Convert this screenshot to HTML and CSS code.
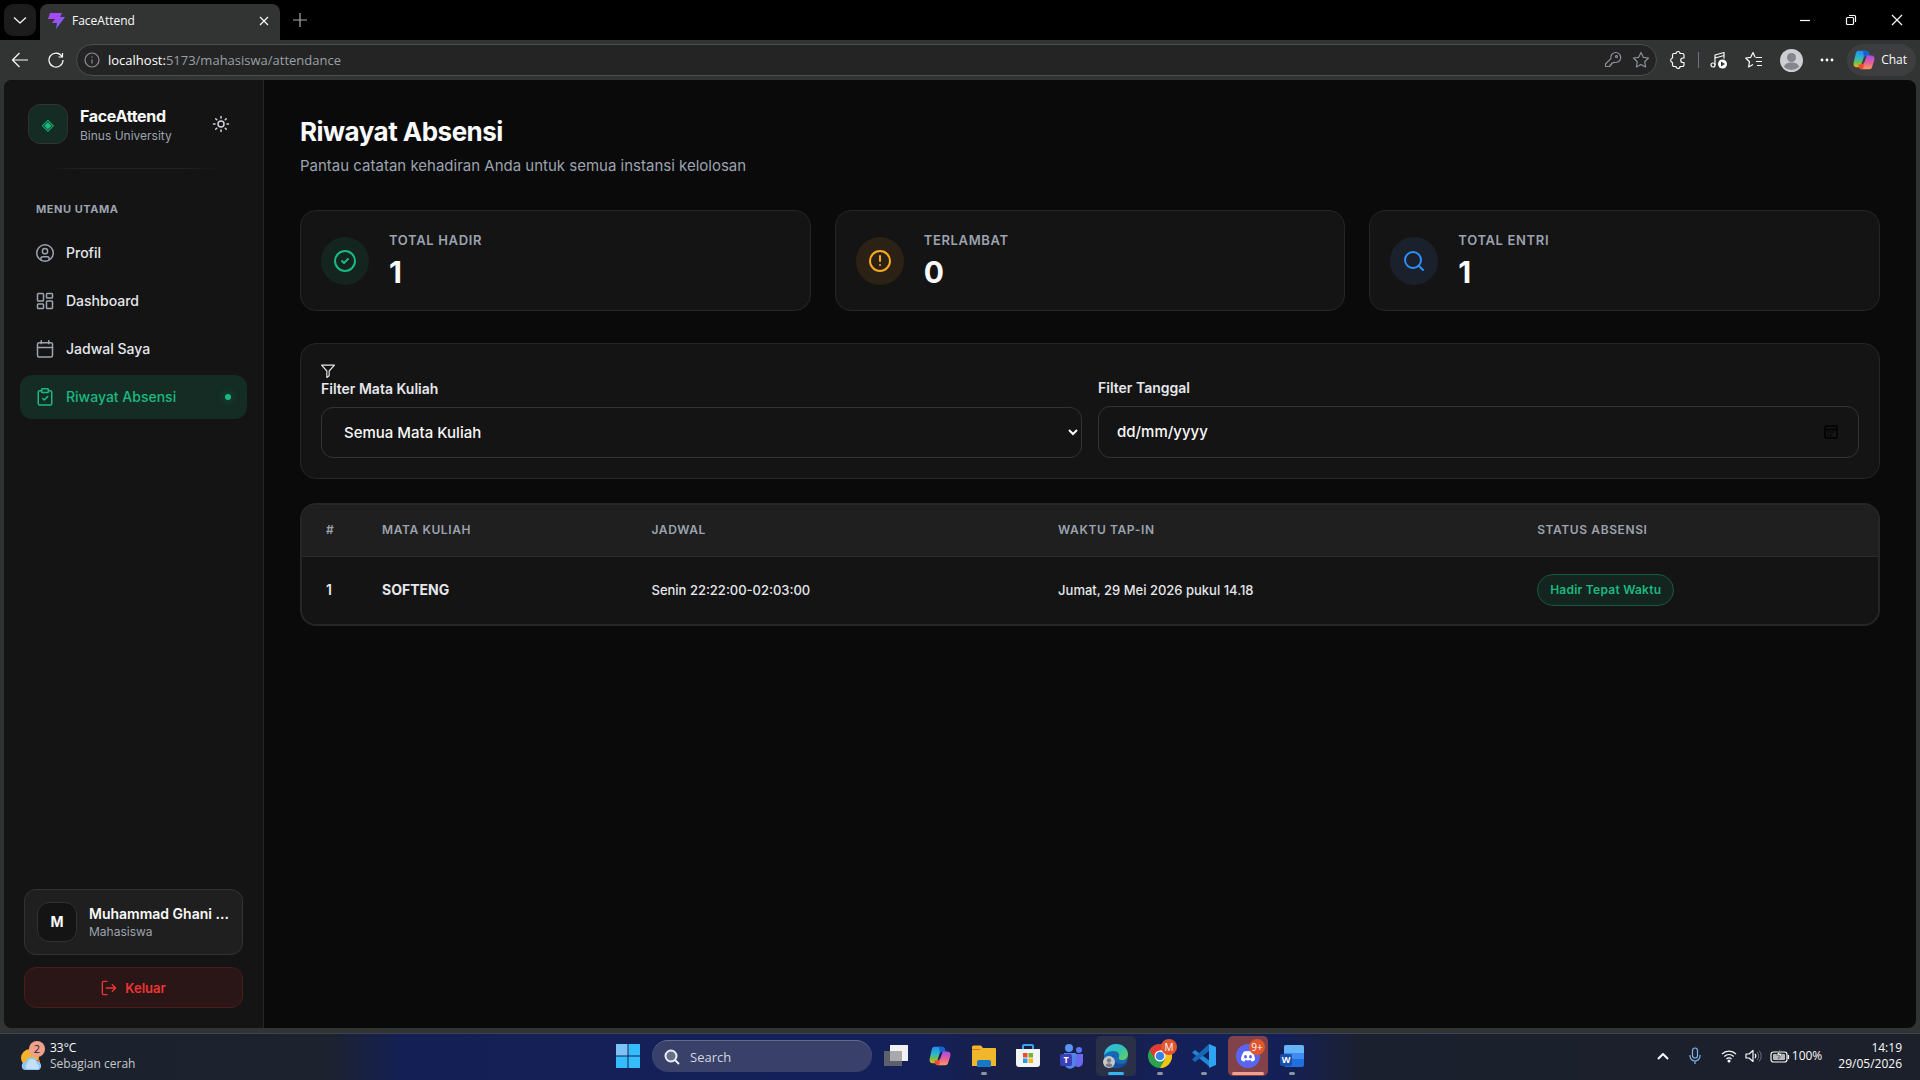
FILE: index.html
```html
<!DOCTYPE html>
<html lang="id">
<head>
<meta charset="utf-8">
<title>FaceAttend</title>
<link rel="stylesheet" href="styles.css">
</head>
<body>
<svg class="defs" width="0" height="0" aria-hidden="true">
  <defs>
    <linearGradient id="g-bolt" x1="0" y1="0" x2="1" y2="1"><stop offset=".5" stop-color="#a34bf5"/><stop offset="1" stop-color="#3a8cf8"/></linearGradient>
    <linearGradient id="g-cp1" x1="0" y1="0" x2="0" y2="1"><stop offset="0" stop-color="#1f8ff0"/><stop offset=".45" stop-color="#2fb6c8"/><stop offset=".7" stop-color="#6cc24a"/><stop offset="1" stop-color="#f6b21b"/></linearGradient>
    <linearGradient id="g-cp2" x1="0" y1="0" x2="0" y2="1"><stop offset="0" stop-color="#a44cf0"/><stop offset=".5" stop-color="#e85a9c"/><stop offset="1" stop-color="#f79a5c"/></linearGradient>
    <linearGradient id="g-edge" x1="0" y1="0" x2="1" y2="1"><stop offset="0" stop-color="#35b8f0"/><stop offset=".5" stop-color="#2fc3b5"/><stop offset="1" stop-color="#6fd14e"/></linearGradient>
    <symbol id="copilot" viewBox="0 0 24 24">
      <path d="M6 2h8c2 0 3 1 3.500 3l.5 2h-3c-2 0-3 1-3.600 3L9 17c-.6 2-1.500 3-3.500 3H4c-2.500 0-4-2-3.300-5L3 5c.5-2 1.300-3 3-3z" fill="url(#g-cp1)"/>
      <path d="M11 2h3c2 0 3 1 3.500 3l.5 2h-3c-1.500 0-2.600.8-3.200 2z" fill="#1660d0"/>
      <path d="M18 22h-8c-2 0-3-1-3.500-3L6 17h3c2 0 3-1 3.600-3L15 7h5c2.500 0 4 2 3.300 5L21 19c-.5 2-1.300 3-3 3z" fill="url(#g-cp2)"/>
      <path d="M6 17h3c1.500 0 2.600-.8 3.200-2L11 22h-1c-2 0-3-1-3.500-3z" fill="#ef4a2b"/>
    </symbol>
  </defs>
</svg>
<div class="window">
  <header class="tabstrip">
    <button class="tab-search" aria-label="Cari tab"><svg width="14" height="14" viewBox="0 0 14 14"><path d="M1 4.500l6 5.500 6-5.500" class="line"/></svg></button>
    <div class="tab">
      <svg width="18" height="18" viewBox="0 0 18 18"><path d="M3 1h12l-2 4h5l-9 12 1-6H5l3-4H1z" fill="url(#g-bolt)"/></svg>
      <span class="tab-title">FaceAttend</span>
      <button class="plain" aria-label="Tutup tab"><svg width="10" height="10" viewBox="0 0 10 10"><path d="M1 1l8 8M9 1l-8 8" class="line"/></svg></button>
    </div>
    <button class="plain new-tab" aria-label="Tab baru"><svg width="16" height="16" viewBox="0 0 16 16"><path d="M8 1v14M1 8h14" class="line"/></svg></button>
    <div class="window-controls">
      <button class="plain" aria-label="Kecilkan"><svg width="12" height="12" viewBox="0 0 12 12"><path d="M1 6.500h10" class="line"/></svg></button>
      <button class="plain" aria-label="Pulihkan"><svg width="12" height="12" viewBox="0 0 12 12"><rect x="1.500" y="3.500" width="7" height="7" rx="1" class="line"/><path d="M4 1.500h5.500a1 1 0 011 1V8" class="line"/></svg></button>
      <button class="plain" aria-label="Tutup"><svg width="12" height="12" viewBox="0 0 12 12"><path d="M1 1l10 10M11 1L1 11" class="line"/></svg></button>
    </div>
  </header>

  <div class="toolbar">
    <button class="plain nav-btn" aria-label="Kembali"><svg width="18" height="18" viewBox="0 0 18 18"><path d="M17 9H2M8.500 2L1.500 9l7 7" class="line"/></svg></button>
    <button class="plain nav-btn" aria-label="Muat ulang"><svg width="16" height="16" viewBox="0 0 16 16"><path d="M14 4.500A7 7 0 1015 8M14.500 1v4h-4" class="line"/></svg></button>
    <div class="address">
      <svg class="dim" width="16" height="16" viewBox="0 0 16 16"><circle cx="8" cy="8" r="7" class="line"/><path d="M8 7.500v4M8 4.500v1.200" class="line"/></svg>
      <span class="url"><b>localhost:</b>5173/mahasiswa/attendance</span>
      <svg class="dim" width="18" height="18" viewBox="0 0 18 18"><path d="M11.500 1.500a5 5 0 11-1.500 9.700L9 12.200H7.500v1.600H6v1.700H1.500V13l5.400-5.400a5 5 0 014.600-6.100z" class="line"/><circle cx="12.500" cy="5.500" r="1" class="line"/></svg>
      <svg class="dim" width="18" height="18" viewBox="0 0 18 18"><path d="M9 1.500l2.300 4.800 5.200.7-3.800 3.700.9 5.300L9 13.500 4.400 16l.9-5.300L1.500 7l5.200-.7z" class="line"/></svg>
    </div>
    <div class="tools">
      <button class="plain" aria-label="Ekstensi"><svg width="18" height="18" viewBox="0 0 18 18"><path d="M5 2.500h2a2 2 0 014 0h2.500a1.500 1.500 0 011.500 1.500v3h-1a2 2 0 000 4.500h1v2.500a1.500 1.500 0 01-1.500 1.500H11a2 2 0 01-4 0H5a1.500 1.500 0 01-1.500-1.500v-2.500a2.300 2.300 0 010-4.500V4A1.500 1.500 0 015 2.500z" class="line"/></svg></button>
      <span class="tool-divider"></span>
      <button class="plain" aria-label="Media"><svg width="18" height="18" viewBox="0 0 18 18"><path d="M5 14V4l9-2.500v6M5 7l9-2.500" class="line"/><circle cx="3" cy="14" r="2" class="line"/><circle cx="12.500" cy="13" r="4.500" fill="#fff"/><path d="M11 10.500l4 2.500-4 2.500z" fill="#323433"/></svg></button>
      <button class="plain" aria-label="Favorit"><svg width="18" height="18" viewBox="0 0 18 18"><path d="M10 6L8 1.500 5.700 6.300l-5 .7L4.500 10.700 3.600 16 8 13.500M10.500 6.500H17M11 10.500h6M12 14.500h5" class="line"/></svg></button>
      <button class="plain" aria-label="Akun"><svg width="23" height="23" viewBox="0 0 23 23"><circle cx="11.500" cy="11.500" r="11.500" fill="#cdced2"/><circle cx="11.500" cy="8.500" r="4.500" fill="#84868e"/><path d="M4 18c1-3.500 4-4.500 7.500-4.500S18 14.500 19 18a11 11 0 01-15 0z" fill="#84868e"/></svg></button>
      <button class="plain" aria-label="Lainnya"><svg width="14" height="14" viewBox="0 0 14 14" fill="#fff"><circle cx="2" cy="7" r="1.400"/><circle cx="7" cy="7" r="1.400"/><circle cx="12" cy="7" r="1.400"/></svg></button>
      <button class="chat"><svg width="22" height="22"><use href="#copilot"/></svg>Chat</button>
    </div>
  </div>

  <div class="viewport">
    <aside class="sidebar">
      <div class="brand">
        <div class="brand-logo">◈</div>
        <div class="brand-text"><div class="brand-name">FaceAttend</div><div class="brand-sub">Binus University</div></div>
        <button class="plain theme" aria-label="Ganti tema"><svg class="icon" width="18" height="18" viewBox="0 0 24 24"><circle cx="12" cy="12" r="4"/><path d="M12 2v2M12 20v2M4.930 4.930l1.410 1.410M17.660 17.660l1.410 1.410M2 12h2M20 12h2M6.340 17.660l-1.410 1.410M19.070 4.930l-1.410 1.410"/></svg></button>
      </div>
      <div class="brand-rule"></div>
      <div class="menu-title">MENU UTAMA</div>
      <nav class="menu">
        <a href="#profil"><svg class="icon" width="18" height="18" viewBox="0 0 24 24"><circle cx="12" cy="12" r="11"/><circle cx="12" cy="9.500" r="3.500"/><path d="M6.500 21v-1.500a2.500 2.500 0 012.500-2.500h6a2.500 2.500 0 012.500 2.500V21"/></svg>Profil</a>
        <a href="#dashboard"><svg class="icon" width="18" height="18" viewBox="0 0 24 24"><rect x="2" y="2" width="8" height="10" rx="1"/><rect x="14" y="2" width="8" height="6" rx="1"/><rect x="14" y="12" width="8" height="10" rx="1"/><rect x="2" y="16" width="8" height="6" rx="1"/></svg>Dashboard</a>
        <a href="#jadwal"><svg class="icon" width="18" height="18" viewBox="0 0 24 24"><path d="M7 1v4M17 1v4M2 10h20"/><rect x="2" y="3.500" width="20" height="19" rx="2"/></svg>Jadwal Saya</a>
        <a href="#riwayat" class="active" aria-current="page"><svg class="icon" width="18" height="18" viewBox="0 0 24 24"><rect x="7.500" y="1" width="9" height="5" rx="1"/><path d="M16.500 3.500H19a2 2 0 012 2v15a2 2 0 01-2 2H5a2 2 0 01-2-2v-15a2 2 0 012-2h2.500M9 14l2 2 4.500-4.500"/></svg>Riwayat Absensi<span class="menu-dot"></span></a>
      </nav>
      <div class="account">
        <div class="user">
          <div class="avatar">M</div>
          <div><div class="user-name">Muhammad Ghani ...</div><div class="user-role">Mahasiswa</div></div>
        </div>
        <button class="logout"><svg class="icon" width="16" height="16" viewBox="0 0 24 24"><path d="M9 22H4a2 2 0 01-2-2V4a2 2 0 012-2h5M8 12h14M17 7l5 5-5 5"/></svg>Keluar</button>
      </div>
    </aside>

    <main class="main">
      <h1>Riwayat Absensi</h1>
      <p class="lead">Pantau catatan kehadiran Anda untuk semua instansi kelolosan</p>

      <section class="stats">
        <div class="stat">
          <div class="stat-icon green"><svg class="icon" width="24" height="24" viewBox="0 0 24 24"><circle cx="12" cy="12" r="10"/><path d="M9 12l2 2 4-4"/></svg></div>
          <div><div class="stat-label">TOTAL HADIR</div><div class="stat-value">1</div></div>
        </div>
        <div class="stat">
          <div class="stat-icon amber"><svg class="icon" width="24" height="24" viewBox="0 0 24 24"><circle cx="12" cy="12" r="10"/><path d="M12 7v5M12 16h.01"/></svg></div>
          <div><div class="stat-label">TERLAMBAT</div><div class="stat-value">0</div></div>
        </div>
        <div class="stat">
          <div class="stat-icon blue"><svg class="icon" width="24" height="24" viewBox="0 0 24 24"><circle cx="11" cy="11" r="8"/><path d="M21 21l-4.300-4.300"/></svg></div>
          <div><div class="stat-label">TOTAL ENTRI</div><div class="stat-value">1</div></div>
        </div>
      </section>

      <section class="filters">
        <div class="field">
          <label for="course"><svg class="icon" width="14" height="14" viewBox="0 0 24 24"><path d="M1 2h22l-9 10v8l-4 3V12z"/></svg>Filter Mata Kuliah</label>
          <select id="course"><option>Semua Mata Kuliah</option></select>
        </div>
        <div class="field">
          <label for="date">Filter Tanggal</label>
          <div class="date-box">
            <input id="date" type="text" placeholder="dd/mm/yyyy">
            <button class="plain picker" aria-label="Pilih tanggal"><svg width="14" height="14" viewBox="0 0 14 14"><rect x="1" y="1" width="12" height="12" rx="1" fill="none" stroke="currentColor" stroke-width="1.500"/><path d="M1 4.500h12" stroke="currentColor" stroke-width="1.500"/><path d="M3.500 7h7M3.500 10h5" stroke="currentColor" stroke-width="1.500" stroke-dasharray="1.500 1"/></svg></button>
          </div>
        </div>
      </section>

      <div class="table-box">
        <table>
          <colgroup><col class="c-no"><col class="c-course"><col class="c-schedule"><col class="c-time"><col></colgroup>
          <thead><tr><th>#</th><th>MATA KULIAH</th><th>JADWAL</th><th>WAKTU TAP-IN</th><th>STATUS ABSENSI</th></tr></thead>
          <tbody><tr><td class="num">1</td><td class="course">SOFTENG</td><td>Senin 22:22:00-02:03:00</td><td>Jumat, 29 Mei 2026 pukul 14.18</td><td><span class="badge">Hadir Tepat Waktu</span></td></tr></tbody>
        </table>
      </div>
    </main>
  </div>
</div>

<footer class="taskbar">
  <div class="weather">
    <svg width="26" height="30" viewBox="0 0 26 30"><circle cx="10" cy="17" r="9" fill="#f5b32c"/><path d="M14 19h6v4h-6z" fill="#e8622a"/><circle cx="17" cy="8" r="8" fill="#f0a08c"/><path d="M6 29a4 4 0 01-.5-8A6 6 0 0117 20a5 5 0 012 9z" fill="#8fc6f5"/><path d="M7 28a3 3 0 010-5 5 5 0 0110 0 3 3 0 011 5z" fill="#c3e0f8"/><text x="17" y="12" text-anchor="middle" class="weather-count">2</text></svg>
    <div><div>33°C</div><div class="weather-text">Sebagian cerah</div></div>
  </div>
  <div class="apps">
    <button class="app" aria-label="Mulai"><svg width="24" height="24" viewBox="0 0 24 24"><path d="M0 0h11.500v11.500H0z" fill="#7cc2f7"/><path d="M12.500 0H24v11.500H12.500zM0 12.500h11.500V24H0zM12.500 12.500H24V24H12.500z" fill="#35bdfb"/></svg></button>
    <label class="search"><svg width="16" height="16" viewBox="0 0 16 16"><circle cx="7" cy="7" r="5.500" fill="#61718a" stroke="#eceef2" stroke-width="2"/><path d="M11 11l4 4" stroke="#eceef2" stroke-width="2"/></svg><input type="text" placeholder="Search" aria-label="Search"></label>
    <div class="app-row">
      <button class="app" aria-label="Tampilan tugas"><svg width="24" height="24" viewBox="0 0 24 24"><path d="M6 1h18v16H6z" fill="#f1f1f1"/><path d="M0 7h18v15H0z" fill="#5c6068"/><path d="M6 7h12v10H6z" fill="#a7a9ad"/></svg></button>
      <button class="app" aria-label="Copilot"><svg width="22" height="22"><use href="#copilot"/></svg></button>
      <button class="app running" aria-label="File Explorer"><svg width="24" height="24" viewBox="0 0 24 24"><path d="M0 3a1.500 1.500 0 011.500-1.500H9L11 4h12a1 1 0 011 1v17H0z" fill="#f0b62c"/><path d="M0 5.500h8" stroke="#e06a2a"/><path d="M5 23v-5a2 2 0 012-2h10a2 2 0 012 2v5z" fill="#1878c8"/></svg></button>
      <button class="app" aria-label="Microsoft Store"><svg width="24" height="24" viewBox="0 0 24 24"><path d="M7 6V2a1 1 0 011-1h8a1 1 0 011 1v4" fill="none" stroke="#35a8f0" stroke-width="2"/><path d="M0 5h24v15a3 3 0 01-3 3H3a3 3 0 01-3-3z" fill="#f2f4f6"/><path d="M7 9h4.500v4.500H7z" fill="#e5502a"/><path d="M12.500 9H17v4.500h-4.500z" fill="#72b532"/><path d="M7 14.500h4.500V19H7z" fill="#2a9df0"/><path d="M12.500 14.500H17V19h-4.500z" fill="#f5b61e"/></svg></button>
      <button class="app" aria-label="Teams"><svg width="24" height="24" viewBox="0 0 24 24"><circle cx="9" cy="4" r="4" fill="#5a92f5"/><circle cx="19" cy="6" r="3" fill="#5a78f0"/><path d="M4 9h12v8a6 6 0 01-12 3z" fill="#4f86ee"/><path d="M16 10h7v8a5 5 0 01-8 4z" fill="#6a68ee"/><rect y="10" width="12" height="12" rx="2" fill="#3b3fb8"/><text x="6" y="19" text-anchor="middle" class="glyph">T</text></svg></button>
      <button class="app running current" aria-label="Edge"><svg width="26" height="26" viewBox="0 0 26 26"><circle cx="13" cy="13" r="12" fill="#1769b8"/><path d="M1 12C2 5 7 1 13 1c7 0 12 5 12 10 0 4-3 6-6 6-3 0-4-1-3-3 1-3-1-6-5-6C6 8 3 10 1 12z" fill="url(#g-edge)"/><path d="M11 11c-2 3 0 9 6 10 3 0 5-1 7-2-3 6-8 6-10 6-6-1-8-9-3-14z" fill="#154c93"/><circle cx="6" cy="19" r="6" fill="#c6c8cc"/><circle cx="6" cy="17.500" r="2.200" fill="#777b83"/><path d="M2.500 22.500c1-3 6-3 7 0-2 2-5 2-7 0z" fill="#777b83"/></svg></button>
      <button class="app running" aria-label="Chrome"><svg width="24" height="24" viewBox="0 0 24 24"><circle cx="12" cy="12" r="12" fill="#2ba24c"/><path d="M1.600 6A12 12 0 0122.400 6H12l-5 9z" fill="#e33b2e"/><path d="M22.400 6A12 12 0 0112 24l5.200-9L12 6z" fill="#fbc116"/><circle cx="12" cy="12" r="5.500" fill="#fff"/><circle cx="12" cy="12" r="4.300" fill="#3b82e8"/></svg><span class="app-badge">M</span></button>
      <button class="app running" aria-label="Visual Studio Code"><svg width="24" height="24" viewBox="0 0 24 24"><path d="M0 8.500L3 6l15 11v6z" fill="#1f86d8"/><path d="M0 15.500L17 0v7L3 18z" fill="#1767b8"/><path d="M17 0l7 3v18l-7 3z" fill="#2fa2f2"/></svg></button>
      <button class="app running alert" aria-label="Discord"><svg width="24" height="24" viewBox="0 0 24 24"><circle cx="12" cy="12" r="12" fill="#5865f2"/><path d="M8 7.500c2.500-.8 5.500-.8 8 0 2 2.500 3 5.500 3 8.500-1 .9-2 1.400-3.300 1.700l-1-1.700c-1.700.5-3.700.5-5.400 0l-1 1.700C7 17.400 6 16.900 5 16c0-3 1-6 3-8.500z" fill="#fff"/><ellipse cx="9.500" cy="12.800" rx="1.500" ry="1.700" fill="#5865f2"/><ellipse cx="14.500" cy="12.800" rx="1.500" ry="1.700" fill="#5865f2"/></svg><span class="app-badge">9+</span></button>
      <button class="app running" aria-label="Word"><svg width="24" height="24" viewBox="0 0 24 24"><rect x="4" y="1" width="20" height="22" rx="2" fill="#1f6fdc"/><path d="M4 3a2 2 0 012-2h16a2 2 0 012 2v6H4z" fill="#63b5f7"/><path d="M4 9h20v6H4z" fill="#3f8cf0"/><rect y="10" width="12" height="12" rx="2" fill="#1a4fae"/><text x="6" y="19" text-anchor="middle" class="glyph">W</text></svg></button>
    </div>
  </div>
  <div class="tray">
    <svg width="12" height="12" viewBox="0 0 12 12"><path d="M1 9l5-5 5 5" class="line bold"/></svg>
    <svg class="mic" width="12" height="18" viewBox="0 0 12 18"><rect x="3.500" y="1" width="5" height="10" rx="2.500" class="line"/><path d="M1 8v1a5 5 0 0010 0V8M6 14v3" class="line"/></svg>
    <div class="tray-group">
      <svg width="16" height="14" viewBox="0 0 16 14"><path d="M1 5a10 10 0 0114 0M3.300 7.500a6.500 6.500 0 019.400 0M5.500 10a3.500 3.500 0 015 0" class="line"/><circle cx="8" cy="12" r="1.500" fill="#fff"/></svg>
      <svg width="17" height="14" viewBox="0 0 17 14"><path d="M1 5h3l4-3.500v11L4 9H1zM10 5a3 3 0 010 4" class="line"/><path d="M12 3a5.500 5.500 0 010 8M14 1.500a8 8 0 010 11" fill="none" stroke="#6b6f77"/></svg>
      <div class="battery">
        <svg width="20" height="14" viewBox="0 0 20 14"><rect x="1" y="3" width="16" height="10" rx="2.500" class="line"/><rect x="3" y="5" width="12" height="6" rx="1" fill="#b5b8bb"/><path d="M18.500 6v4" class="line"/><path d="M10.500 0L6.500 6h3L8.500 10l4-5.500h-3z" fill="#fff" stroke="#1d212b" stroke-width=".5"/></svg>
        <span>100%</span>
      </div>
    </div>
    <div class="clock"><div>14:19</div><div>29/05/2026</div></div>
  </div>
</footer>
</body>
</html>
```
FILE: styles.css
```css
* { box-sizing: border-box; }
body {
  margin: 0;
  min-height: 100vh;
  display: flex;
  flex-direction: column;
  background: #0a0a0a;
  color: #fafafa;
  font: 14px/20px Inter, "Liberation Sans", sans-serif;
}
button, input, select { font: inherit; color: inherit; }
svg { flex: none; display: block; overflow: visible; }
h1, p { margin: 0; }
.defs { position: absolute; }
.line { fill: none; stroke: currentColor; stroke-width: 1.2; stroke-linejoin: round; }
.line.bold { stroke-width: 2; }
.icon { fill: none; stroke: currentColor; stroke-width: 2; stroke-linecap: round; stroke-linejoin: round; }
.plain { display: grid; place-items: center; padding: 0; border: 0; background: none; }

/* Browser frame */
.window {
  flex: 1;
  display: flex;
  flex-direction: column;
  background: #323433;
  font-family: "Open Sans", "Noto Sans", sans-serif;
}
.tabstrip { display: flex; align-items: center; height: 40px; padding-left: 4px; background: #000; }
.tab-search {
  display: grid;
  place-items: center;
  width: 32px;
  height: 32px;
  padding: 0;
  border: 0;
  border-radius: 9px;
  background: #1c1c1c;
}
.tab {
  display: flex;
  align-items: center;
  gap: 7px;
  align-self: flex-end;
  width: 240px;
  height: 36px;
  margin-left: 4px;
  padding: 0 11px 2px 7px;
  border-radius: 8px 8px 0 0;
  background: #323433;
}
.tab-title { flex: 1; font-size: 12px; }
.new-tab { margin-left: 12px; color: #aaa; }
.window-controls { display: flex; margin-left: auto; }
.window-controls button { width: 46px; height: 40px; }
.toolbar { display: flex; align-items: center; height: 40px; padding: 0 4px 0 2px; }
.nav-btn { width: 36px; height: 36px; }
.address {
  flex: 1;
  display: flex;
  align-items: center;
  gap: 10px;
  height: 32px;
  margin-left: 2px;
  padding: 0 6px 0 7px;
  border: 1px solid #4c4e4d;
  border-radius: 16px;
  background: #242424;
}
.dim { color: #8b9098; }
.url { flex: 1; margin-left: -2px; color: #9aa0a6; font-size: 13px; }
.url b { color: #fff; font-weight: 400; }
.tools { display: flex; align-items: center; gap: 17px; margin-left: 12px; }
.tool-divider { width: 1px; height: 16px; margin: 0 -6px; background: #6b7280; }
.chat {
  display: flex;
  align-items: center;
  gap: 6px;
  height: 32px;
  margin-left: -4px;
  padding: 0 9px 0 6px;
  border: 0;
  border-radius: 16px;
  background: #3e3e40;
  font-size: 12px;
}
.viewport {
  flex: 1;
  display: flex;
  margin: 0 4px 5px;
  border-radius: 8px;
  overflow: hidden;
  background: #0a0a0a;
  font-family: Inter, "Liberation Sans", sans-serif;
}

/* Sidebar */
.sidebar {
  flex: none;
  display: flex;
  flex-direction: column;
  width: 260px;
  border-right: 1px solid #262626;
  background: #141414;
}
.brand { display: flex; align-items: center; gap: 12px; padding: 24px; }
.brand-logo, .avatar {
  display: grid;
  place-items: center;
  flex: none;
  width: 40px;
  height: 40px;
  border: 1px solid #2e3331;
  border-radius: 12px;
}
.brand-logo { background: #142c24; color: #1bb981; font: 16px "DejaVu Sans", sans-serif; }
.brand-text { flex: 1; }
.brand-name { font-size: 16px; line-height: 24px; font-weight: 700; letter-spacing: -0.02em; }
.brand-sub { color: #9ca3af; font-size: 12px; line-height: 16px; }
.theme { width: 36px; height: 36px; color: #d1d5db; }
.brand-rule { height: 1px; margin: 0 44px; background: linear-gradient(90deg, transparent, #222 20%, #222 80%, transparent); }
.menu-title { margin: 30px 32px 12px; color: #9ca3af; font-size: 11px; font-weight: 700; letter-spacing: 0.05em; }
.menu { display: flex; flex-direction: column; gap: 4px; padding: 0 16px; }
.menu a {
  display: flex;
  align-items: center;
  gap: 12px;
  height: 44px;
  padding: 0 16px;
  border-radius: 12px;
  color: #e5e7eb;
  font-weight: 500;
  text-decoration: none;
}
.menu a .icon { color: #9ca3af; }
.menu a.active, .menu a.active .icon { color: #1bb981; }
.menu a.active { background: #142c24; }
.menu-dot { width: 6px; height: 6px; margin-left: auto; border-radius: 50%; background: #1bb981; box-shadow: 0 0 8px #1bb98180; }
.account { display: grid; gap: 12px; margin-top: auto; padding: 20px; }
.user {
  display: flex;
  align-items: center;
  gap: 12px;
  padding: 12px;
  border: 1px solid #333;
  border-radius: 12px;
  background: #1f1f1f;
}
.avatar { background: #141414; font-weight: 700; }
.user-name { white-space: nowrap; font-weight: 600; }
.user-role { color: #9ca3af; font-size: 12px; line-height: 16px; }
.logout {
  display: flex;
  align-items: center;
  justify-content: center;
  gap: 8px;
  height: 41px;
  border: 1px solid #4a1c1c;
  border-radius: 12px;
  background: #2a1617;
  color: #ef3434;
  font-size: 13px;
  font-weight: 600;
}

/* Page */
.main { flex: 1; min-width: 0; padding: 32px 36px; }
h1 { font-size: 26px; line-height: 40px; font-weight: 700; letter-spacing: -0.02em; }
.lead { margin-top: 2px; color: #9ca3af; font-size: 15px; line-height: 24px; }
.stats { display: grid; grid-template-columns: repeat(3, 1fr); gap: 24px; margin: 32px 0; }
.stat, .filters { border: 1px solid #262626; border-radius: 16px; background: #141414; }
.stat { display: flex; align-items: center; gap: 20px; height: 101px; padding: 0 20px; }
.stat-icon { display: grid; place-items: center; width: 48px; height: 48px; border-radius: 50%; }
.green { background: #14241e; color: #1bb981; }
.amber { background: #2b2114; color: #fba91e; }
.blue { background: #1a212c; color: #2e90f4; }
.stat-label { color: #9ca3af; font-size: 13px; font-weight: 600; letter-spacing: 0.05em; }
.stat-value { margin-top: 2px; font-size: 30px; line-height: 40px; font-weight: 700; }
.filters { display: grid; grid-template-columns: 1fr 1fr; align-items: end; gap: 16px; padding: 20px; }
.field { display: grid; gap: 8px; }
.field label { color: #e5e7eb; line-height: 21px; font-weight: 600; }
.field select, .date-box {
  width: 100%;
  border: 1px solid #333;
  border-radius: 12px;
  background: #141414;
  font-size: 15px;
  font-weight: 500;
}
.field select { height: 51px; padding: 0 18px; }
.date-box { display: flex; align-items: center; height: 52px; padding: 0 20px 0 18px; }
.date-box input { flex: 1; min-width: 0; padding: 0; border: 0; outline: 0; background: none; }
.date-box input::placeholder { color: #fafafa; opacity: 1; }
.picker { color: #000; }
.table-box { margin-top: 24px; border: 2px solid #262626; border-radius: 16px; overflow: hidden; background: #141414; }
table { width: 100%; table-layout: fixed; border-collapse: collapse; }
.c-no { width: 56px; }
.c-course { width: 17.1%; }
.c-schedule { width: 25.8%; }
.c-time { width: 30.4%; }
th, td { padding: 0 24px; text-align: left; white-space: nowrap; }
th { height: 51px; border-bottom: 1px solid #2a2a2a; background: #1f1f1f; color: #9ca3af; font-size: 12px; font-weight: 600; letter-spacing: 0.05em; }
th:first-child, td:first-child { padding-right: 0; }
td { height: 68px; color: #e5e7eb; font-size: 13px; font-weight: 500; }
.num { font-size: 14px; font-weight: 600; }
.course { font-size: 14px; font-weight: 700; }
.badge {
  display: inline-block;
  padding: 5px 12px;
  border: 1px solid #145a42;
  border-radius: 16px;
  background: #14241e;
  color: #1bb981;
  font-size: 12px;
  font-weight: 600;
  letter-spacing: 0.02em;
}

/* Desktop taskbar */
.taskbar {
  display: grid;
  grid-template-columns: 1fr auto 1fr;
  align-items: center;
  height: 47px;
  padding-bottom: 2px;
  border-top: 1px solid #3d4450;
  background: linear-gradient(90deg, #1c222c 0%, #1c222e 17%, #142055 21%, #14205a 48%, #182048 52%, #182048 57%, #14205a 61%, #142055 67%, #1b202e 71%, #1c202b 100%);
  font: 12px/16px "Open Sans", "Noto Sans", sans-serif;
}
.weather { display: flex; align-items: center; gap: 4px; padding-left: 20px; }
.weather-text { color: #c6c9ce; }
.weather-count { font-size: 11px; fill: #222; }
.glyph { font-size: 9px; font-weight: 700; fill: #fff; }
.apps, .app-row { display: flex; gap: 4px; }
.app { position: relative; display: grid; place-items: center; width: 40px; height: 40px; padding: 0; border: 0; border-radius: 5px; background: none; }
.running::after { content: ""; position: absolute; bottom: 1px; left: 17px; width: 6px; height: 3px; border-radius: 2px; background: #8d95a3; }
.current { background: #2a3048; }
.current::after { left: 12px; width: 16px; background: #35b4f5; }
.alert { background: #824249; }
.alert::after { left: 4px; width: 32px; background: #f2a08e; }
.app-badge {
  position: absolute;
  top: 3px;
  right: 3px;
  width: 16px;
  height: 16px;
  border-radius: 50%;
  background: #e2562e;
  font-size: 10px;
  line-height: 16px;
}
.search {
  display: flex;
  align-items: center;
  gap: 10px;
  align-self: center;
  width: 220px;
  height: 32px;
  padding: 0 12px;
  border-top: 1px solid #646b8a;
  border-radius: 16px;
  background: #39416a;
}
.search input { width: 100%; padding: 0; border: 0; outline: 0; background: none; font-size: 13px; }
.search input::placeholder { color: #d3d6df; opacity: 1; }
.tray { display: flex; align-items: center; justify-content: flex-end; gap: 20px; padding-right: 18px; }
.mic { color: #82b4ec; }
.tray-group { display: flex; align-items: center; gap: 8px; }
.battery { display: flex; align-items: center; gap: 2px; }
.clock { margin-left: -4px; text-align: right; }
```
